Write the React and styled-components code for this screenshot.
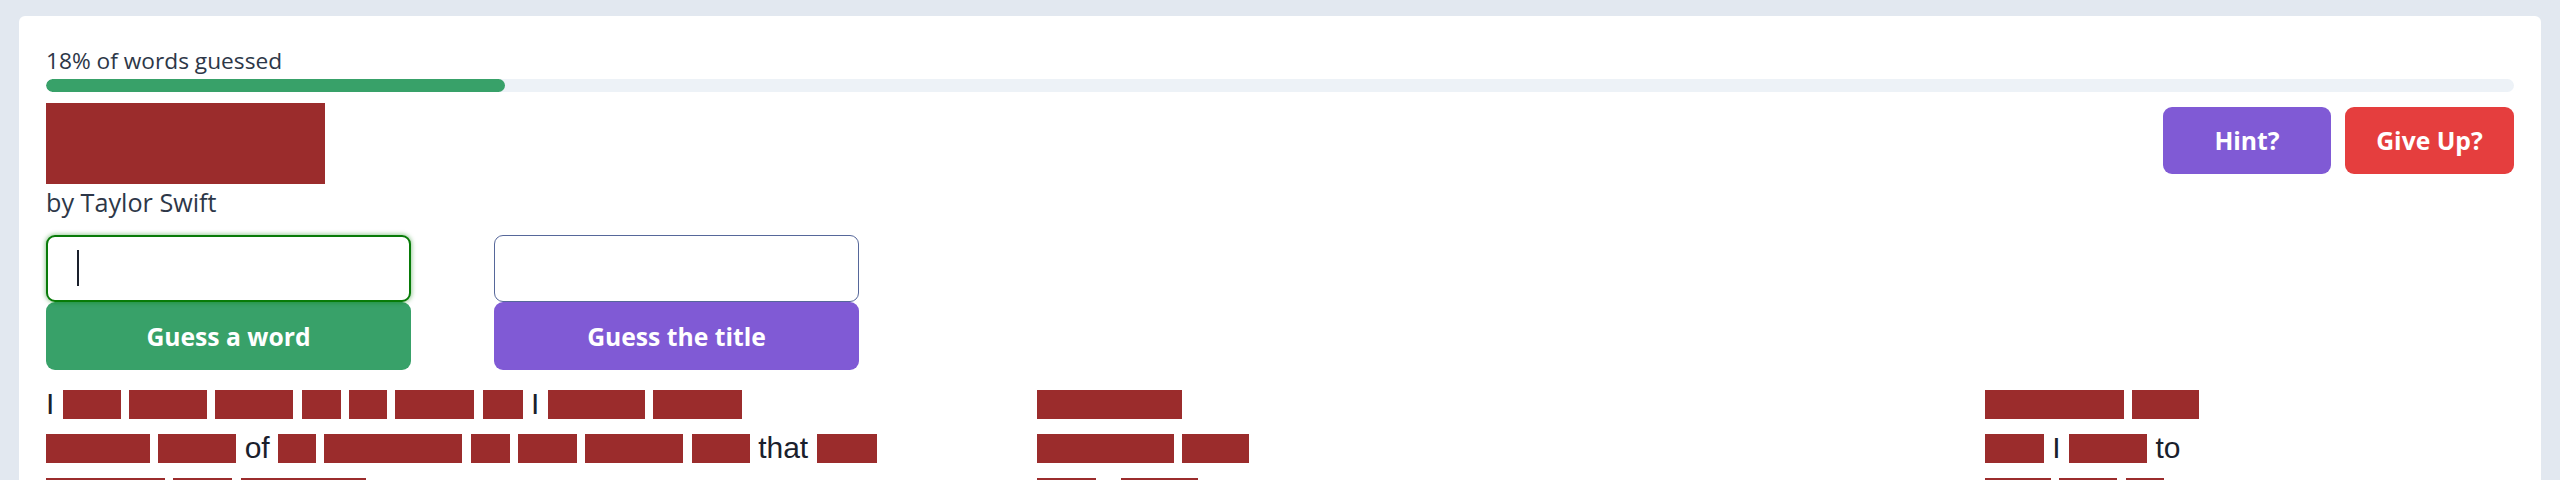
import React from 'react';
import styled, { createGlobalStyle } from 'styled-components';

const GlobalStyle = createGlobalStyle`
  html, body {
    margin: 0;
    padding: 0;
    background: #e2e8f0;
  }
  body {
    font-family: "Open Sans", "Noto Sans", sans-serif;
    color: #2d3748;
  }
`;

const progress = { guessed: 186, total: 1000 };

// widths are the pixel widths of the words still hidden
const columns = [
  [
    ['I', 58, 78, 78, 39, 38, 79, 40, 'I', 97, 89],
    [104, 78, 'of', 38, 138, 39, 59, 98, 58, 'that', 60],
    [119, 59, 125],
  ],
  [
    [145],
    [137, 67],
    [59, 'I', 77],
  ],
  [
    [139, 67],
    [59, 'I', 78, 'to'],
    [66, 58, 38],
  ],
];

const Page = styled.div`
  padding: 16px 19px;
`;

const Card = styled.div`
  background: #ffffff;
  border-radius: 6px;
  padding: 27px 27px 40px;
`;

const ProgressLabel = styled.div`
  font-size: 22.7px;
  line-height: 36px;
`;

const Track = styled.div`
  height: 13px;
  border-radius: 999px;
  background: #edf2f7;
  overflow: hidden;
`;

const Fill = styled.div`
  height: 100%;
  border-radius: 999px;
  background: #38a169;
`;

const Header = styled.div`
  display: flex;
  justify-content: space-between;
  align-items: flex-start;
  margin-top: 11px;
`;

const HiddenTitle = styled.div`
  width: 279px;
  height: 81px;
  background: #9b2c2c;
`;

const Artist = styled.div`
  font-size: 25.2px;
  line-height: 36px;
`;

const Actions = styled.div`
  display: flex;
  gap: 14px;
  margin-top: 4px;
`;

const Button = styled.button`
  border: none;
  border-radius: 9px;
  background: ${(p) => p.$bg};
  color: #ffffff;
  font-family: inherit;
  font-weight: 700;
  font-size: 24.7px;
  cursor: pointer;
  width: ${(p) => p.$width || '100%'};
  height: ${(p) => p.$height || '68px'};
`;

const GuessRow = styled.div`
  display: flex;
  gap: 83px;
  margin-top: 15px;
`;

const GuessColumn = styled.div`
  width: 365px;
  display: flex;
  flex-direction: column;
`;

const InputWrap = styled.div`
  position: relative;
`;

const Input = styled.input`
  display: block;
  width: 100%;
  height: 67px;
  box-sizing: border-box;
  border-radius: 9px;
  border: ${(p) => (p.$focused ? '2px solid #087b08' : '1px solid #56679a')};
  box-shadow: ${(p) => (p.$focused ? '0 0 4px 1px rgba(0, 128, 0, 0.4)' : 'none')};
  padding: 0 28px;
  font-family: inherit;
  font-size: 24px;
  outline: none;
  caret-color: transparent;
`;

const Caret = styled.span`
  position: absolute;
  left: 31px;
  top: 15px;
  width: 2px;
  height: 36px;
  background: #1a202c;
`;

const Lyrics = styled.div`
  display: grid;
  grid-template-columns: 991px 948px 1fr;
  margin-top: 12px;
  font-family: "Liberation Sans", Arial, sans-serif;
  font-size: 30px;
  line-height: 44px;
  color: #1a202c;
`;

const Line = styled.div`
  white-space: nowrap;
`;

const Hidden = styled.span`
  display: inline-block;
  width: ${(p) => p.$w}px;
  height: 29px;
  vertical-align: -5px;
  background: #9b2c2c;
`;

function LyricLine({ items }) {
  return (
    <Line>
      {items.map((item, i) => (
        <React.Fragment key={i}>
          {i > 0 && ' '}
          {typeof item === 'number' ? <Hidden $w={item} /> : item}
        </React.Fragment>
      ))}
    </Line>
  );
}

export default function App() {
  const ratio = progress.guessed / progress.total;
  return (
    <Page>
      <GlobalStyle />
      <Card>
        <ProgressLabel>{Math.floor(ratio * 100)}% of words guessed</ProgressLabel>
        <Track>
          <Fill style={{ width: `${ratio * 100}%` }} />
        </Track>

        <Header>
          <div>
            <HiddenTitle />
            <Artist>by Taylor Swift</Artist>
          </div>
          <Actions>
            <Button $bg="#805ad5" $width="168px" $height="67px">Hint?</Button>
            <Button $bg="#e53e3e" $width="169px" $height="67px">Give Up?</Button>
          </Actions>
        </Header>

        <GuessRow>
          <GuessColumn>
            <InputWrap>
              <Input $focused />
              <Caret />
            </InputWrap>
            <Button $bg="#38a169">Guess a word</Button>
          </GuessColumn>
          <GuessColumn>
            <Input />
            <Button $bg="#805ad5">Guess the title</Button>
          </GuessColumn>
        </GuessRow>

        <Lyrics>
          {columns.map((lines, c) => (
            <div key={c}>
              {lines.map((items, l) => (
                <LyricLine key={l} items={items} />
              ))}
            </div>
          ))}
        </Lyrics>
      </Card>
    </Page>
  );
}
